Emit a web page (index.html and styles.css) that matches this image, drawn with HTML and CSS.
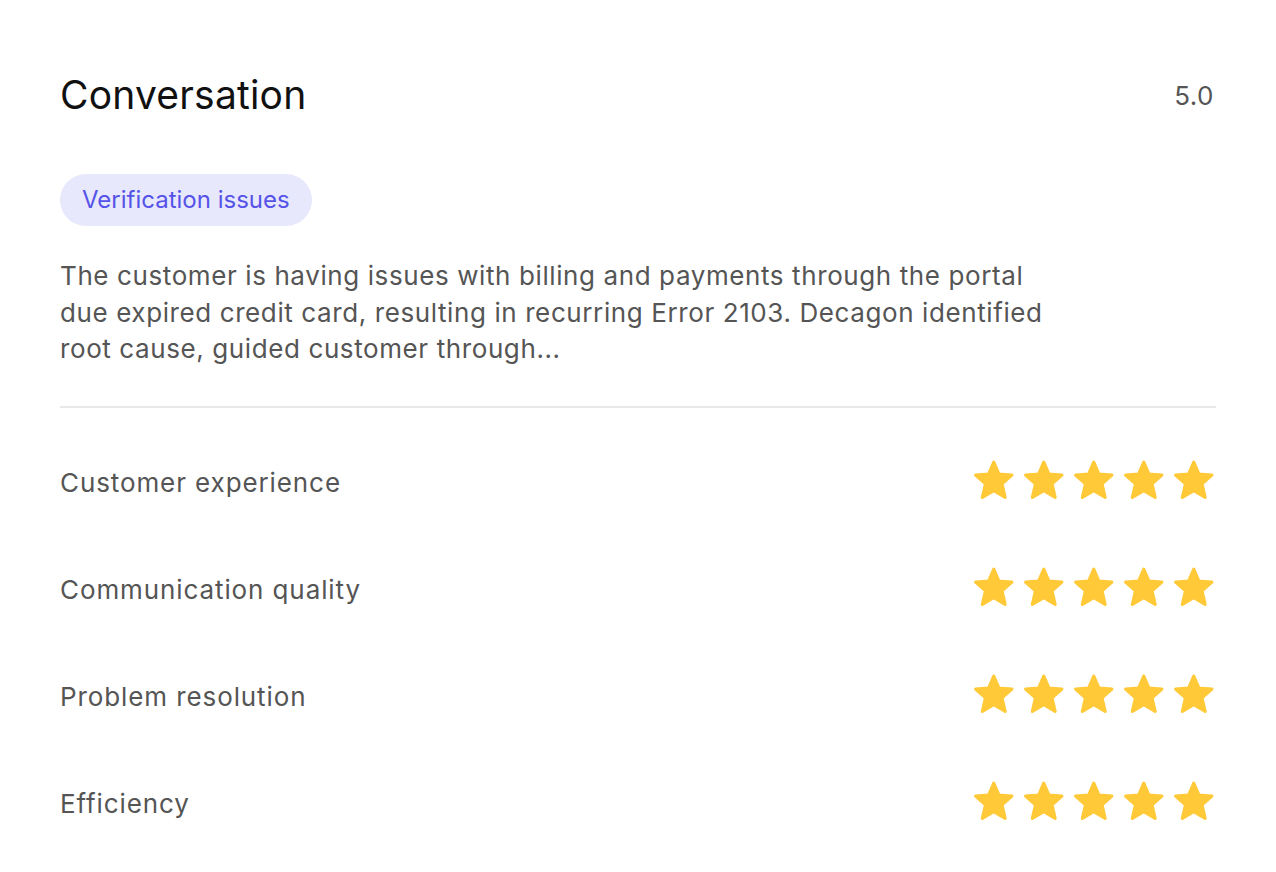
FILE: index.html
```html
<!DOCTYPE html>
<html lang="en">
<head>
    <meta charset="UTF-8">
    <meta name="viewport" content="width=device-width, initial-scale=1.0">
    <title>Conversation</title>
    <link rel="stylesheet" href="styles.css">
</head>
<body>
    <svg width="0" height="0" class="defs">
        <defs>
            <symbol id="star" viewBox="0 0 40 40">
                <polygon points="20,3 25,14.5 37.5,15.5 28,24 31,37 20,30.5 9,37 12,24 2.5,15.5 15,14.5"
                    fill="#ffc938" stroke="#ffc938" stroke-width="3" stroke-linejoin="round"/>
            </symbol>
        </defs>
    </svg>

    <div class="card">
        <div class="header">
            <h1>Conversation</h1>
            <span class="score">5.0</span>
        </div>

        <span class="tag">Verification issues</span>

        <p class="summary">The customer is having issues with billing and payments through the portal due expired credit card, resulting in recurring Error 2103. Decagon identified root cause, guided customer through...</p>

        <div class="ratings">
            <div class="rating-row">
                <span class="label">Customer experience</span>
                <div class="stars">
                    <svg><use href="#star"/></svg><svg><use href="#star"/></svg><svg><use href="#star"/></svg><svg><use href="#star"/></svg><svg><use href="#star"/></svg>
                </div>
            </div>
            <div class="rating-row">
                <span class="label">Communication quality</span>
                <div class="stars">
                    <svg><use href="#star"/></svg><svg><use href="#star"/></svg><svg><use href="#star"/></svg><svg><use href="#star"/></svg><svg><use href="#star"/></svg>
                </div>
            </div>
            <div class="rating-row">
                <span class="label">Problem resolution</span>
                <div class="stars">
                    <svg><use href="#star"/></svg><svg><use href="#star"/></svg><svg><use href="#star"/></svg><svg><use href="#star"/></svg><svg><use href="#star"/></svg>
                </div>
            </div>
            <div class="rating-row">
                <span class="label">Efficiency</span>
                <div class="stars">
                    <svg><use href="#star"/></svg><svg><use href="#star"/></svg><svg><use href="#star"/></svg><svg><use href="#star"/></svg><svg><use href="#star"/></svg>
                </div>
            </div>
        </div>
    </div>
</body>
</html>
```

FILE: styles.css
```css
body {
    margin: 0;
    background: #fff;
    font-family: Inter, "Noto Sans", sans-serif;
    color: #555;
}
.defs {
    position: absolute;
}
.card {
    padding: 70px 60px 40px 60px;
    display: flex;
    flex-direction: column;
    align-items: flex-start;
}
.header {
    display: flex;
    justify-content: space-between;
    align-items: center;
    width: 100%;
}
h1 {
    margin: 0;
    font-size: 39px;
    font-weight: 400;
    color: #111;
    letter-spacing: 0.2px;
    line-height: 50px;
}
.score {
    font-size: 26px;
    letter-spacing: 0.5px;
    color: #555;
    margin-right: 2px;
}
.tag {
    margin-top: 54px;
    background: #e8e8fc;
    color: #5553e8;
    font-size: 24px;
    line-height: 52px;
    padding: 0 22px;
    border-radius: 26px;
}
.summary {
    margin: 32px 0 0 0;
    max-width: 1000px;
    font-size: 26px;
    letter-spacing: 0.6px;
    line-height: 36.5px;
    color: #555;
}
.ratings {
    width: 100%;
    margin-top: 38px;
    border-top: 2px solid #e8e8e8;
    padding-top: 21px;
}
.rating-row {
    display: flex;
    justify-content: space-between;
    align-items: center;
    height: 107px;
}
.label {
    font-size: 26px;
    letter-spacing: 0.9px;
}
.stars {
    display: flex;
    gap: 8.5px;
    margin-right: 2px;
    margin-top: -4px;
}
.stars svg {
    width: 41.5px;
    height: 41.5px;
}
```
